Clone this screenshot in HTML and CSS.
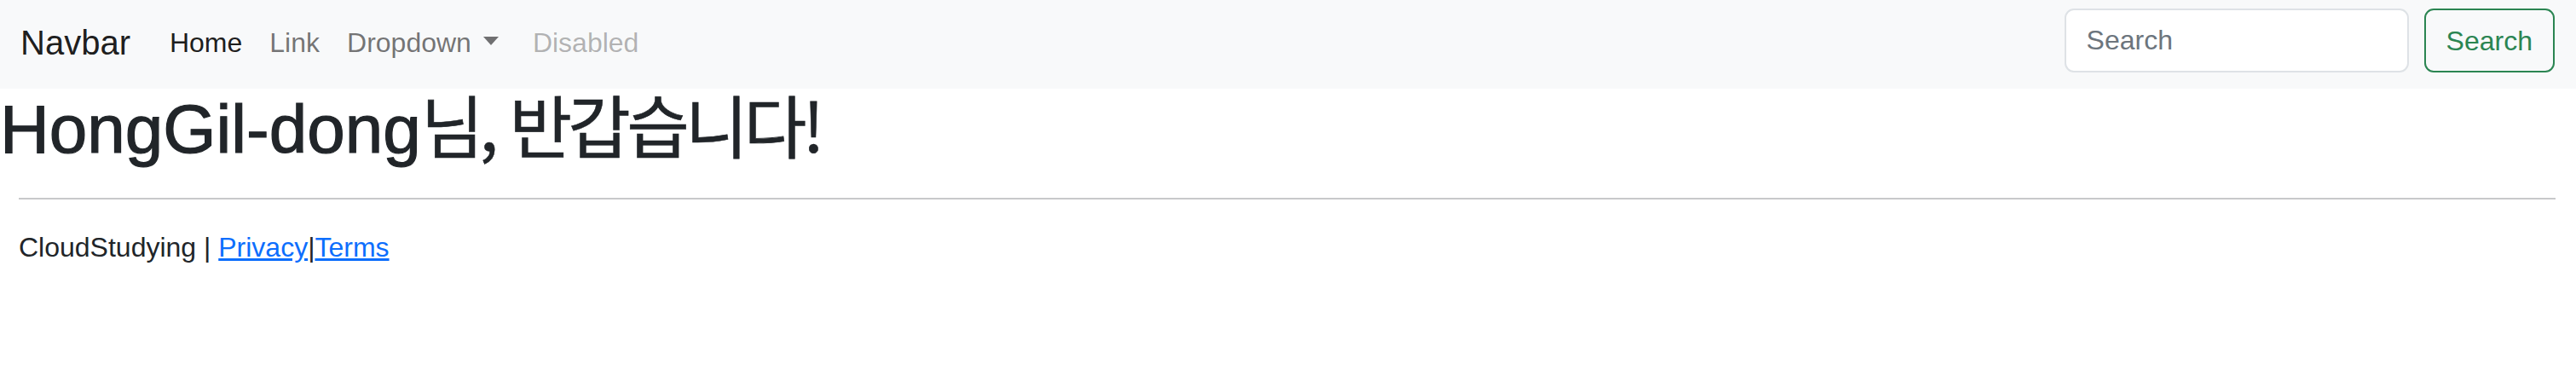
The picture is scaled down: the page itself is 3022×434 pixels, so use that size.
FILE: index.html
```html
<!DOCTYPE html>
<html lang="ko">
<head>
<meta charset="utf-8">
<title>Navbar</title>
<link rel="stylesheet" href="styles.css">
</head>
<body>
<nav class="navbar">
  <a class="brand" href="#">Navbar</a>
  <ul class="nav">
    <li><a class="nav-link active" href="#">Home</a></li>
    <li><a class="nav-link" href="#">Link</a></li>
    <li><a class="nav-link dropdown" href="#">Dropdown<span class="caret"></span></a></li>
    <li><a class="nav-link disabled" href="#">Disabled</a></li>
  </ul>
  <form class="search">
    <input class="search-input" type="search" placeholder="Search">
    <button class="search-btn" type="button">Search</button>
  </form>
</nav>
<h1 class="greeting">HongGil-dong<span class="ko">님, 반갑습니다!</span></h1>
<footer class="footer">
  <hr class="rule">
  <p class="footer-text">CloudStudying | <a href="#">Privacy</a>|<a href="#">Terms</a></p>
</footer>
</body>
</html>
```
FILE: styles.css
```css
html, body {
  margin: 0;
  padding: 0;
  background: #fff;
}
body {
  font-family: "Liberation Sans", Arial, "Noto Sans CJK KR", sans-serif;
  color: #212529;
  font-size: 32px;
  line-height: 1.5;
}
.navbar {
  display: flex;
  align-items: center;
  height: 104px;
  box-sizing: border-box;
  padding: 10px 25px 19px 24px;
  background: #f8f9fa;
}
.brand {
  font-size: 40px;
  line-height: 60px;
  color: rgba(0, 0, 0, 0.9);
  text-decoration: none;
  margin-right: 30px;
  padding-top: 4px;
}
.nav {
  display: flex;
  list-style: none;
  margin: 0;
  padding: 4px 0 0;
  flex: 1;
}
.nav-link {
  display: block;
  padding: 8px 16px;
  color: rgba(0, 0, 0, 0.55);
  text-decoration: none;
  line-height: 48px;
}
.nav-link.active {
  color: rgba(0, 0, 0, 0.9);
}
.nav-link.dropdown {
  padding-right: 24px;
}
.nav-link.disabled {
  color: rgba(0, 0, 0, 0.3);
}
.caret {
  display: inline-block;
  margin-left: 14px;
  vertical-align: 8px;
  border-top: 10px solid;
  border-left: 9px solid transparent;
  border-right: 9px solid transparent;
}
.search {
  display: flex;
  gap: 18px;
}
.search-input {
  box-sizing: border-box;
  width: 404px;
  height: 75px;
  padding: 12px 24px;
  font: inherit;
  color: #212529;
  background: #fff;
  border: 2px solid #dee2e6;
  border-radius: 11px;
  outline: none;
}
.search-input::placeholder {
  color: #6c757d;
}
.search-btn {
  box-sizing: border-box;
  height: 75px;
  padding: 12px 24px;
  font: inherit;
  color: #2b8552;
  background: transparent;
  border: 2px solid #2b8552;
  border-radius: 11px;
}
.greeting {
  margin: 0;
  font-size: 80px;
  font-weight: 400;
  line-height: 96px;
  color: #212529;
  -webkit-text-stroke: 1.2px #212529;
}
.ko {
  font-family: "Noto Sans CJK KR", sans-serif;
  font-weight: 400;
  letter-spacing: -0.06em;
  line-height: 0;
  -webkit-text-stroke: 0.6px #212529;
}
.footer {
  padding: 0 24px 0 22px;
}
.rule {
  margin: 32px 0 32px;
  border: 0;
  border-top: 2px solid #c8c9ca;
}
.footer-text {
  margin: 0;
  line-height: 48px;
}
.footer-text a {
  color: #0d6efd;
  text-decoration: underline;
}
```
